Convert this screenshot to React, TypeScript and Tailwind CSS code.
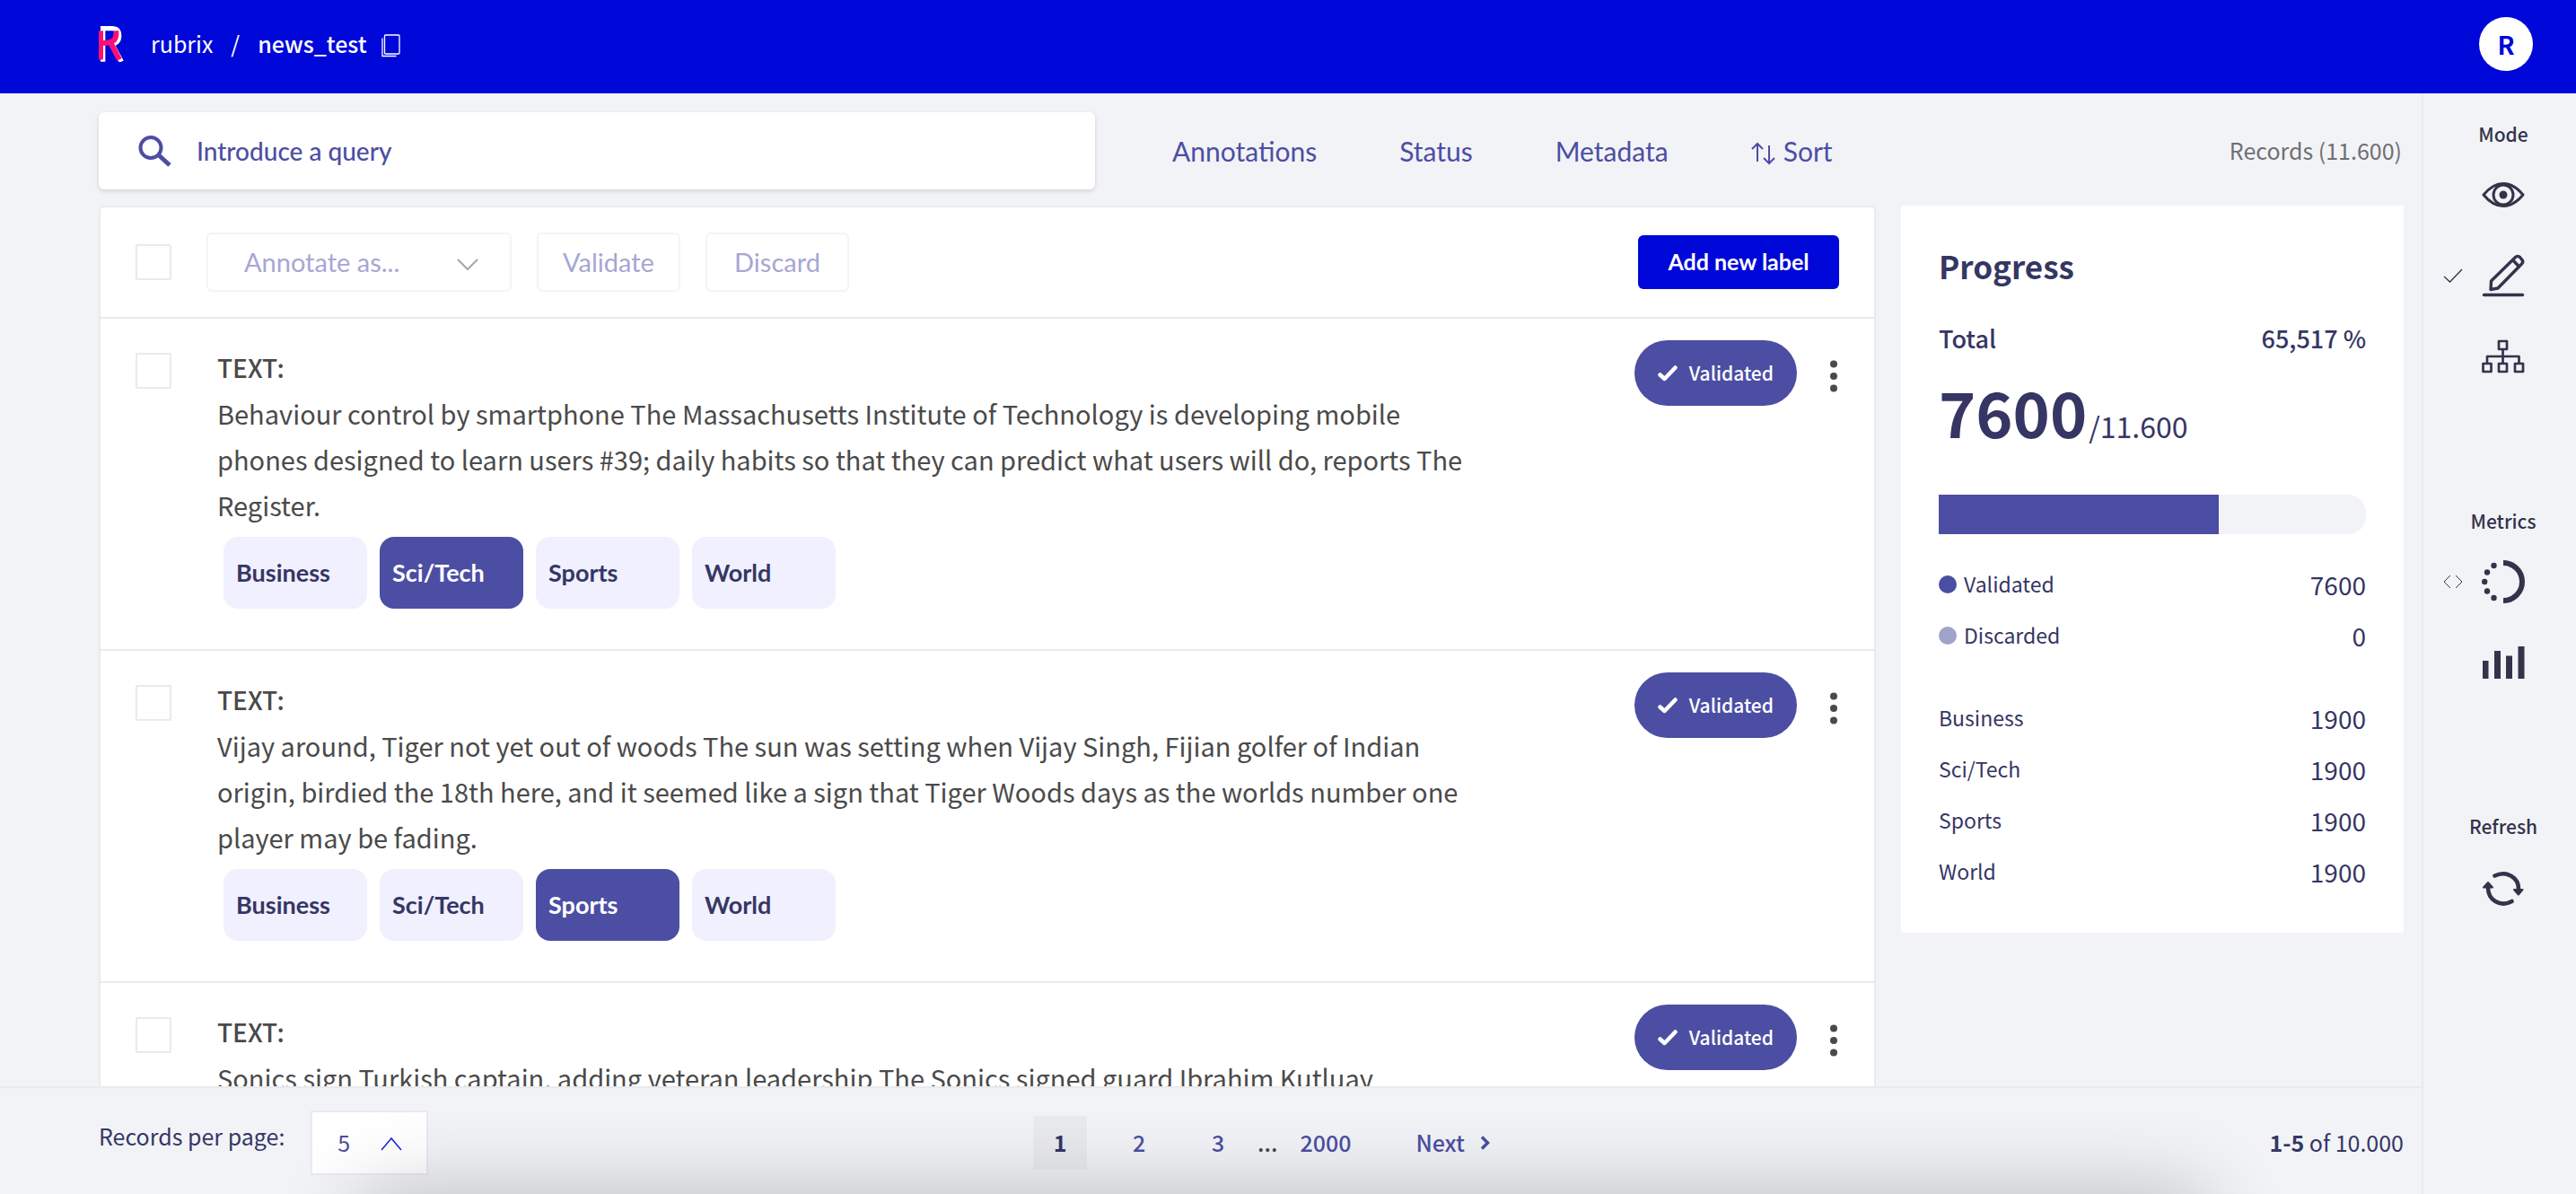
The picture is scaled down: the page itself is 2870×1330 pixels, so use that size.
import React from "react";

const LABELS = ["Business", "Sci/Tech", "Sports", "World"];

const RECORDS = [
  {
    text: "Behaviour control by smartphone The Massachusetts Institute of Technology is developing mobile phones designed to learn users #39; daily habits so that they can predict what users will do, reports The Register.",
    label: "Sci/Tech",
  },
  {
    text: "Vijay around, Tiger not yet out of woods The sun was setting when Vijay Singh, Fijian golfer of Indian origin, birdied the 18th here, and it seemed like a sign that Tiger Woods days as the worlds number one player may be fading.",
    label: "Sports",
  },
  {
    text: "Sonics sign Turkish captain, adding veteran leadership The Sonics signed guard Ibrahim Kutluay",
    label: "Sports",
  },
];

const VALIDATED = 7600;
const TOTAL = 11600;

function Logo() {
  return (
    <svg viewBox="0 0 84 120" className="h-10 w-7" fill="none" aria-label="Rubrix logo">
      <path d="M14 119V8H44C61 8 68 18 68 33C68 49 58 59 44 60L76 119" stroke="#fff" strokeWidth="16" />
      <path d="M7.500 16V112" stroke="#ff0f73" strokeWidth="15" />
      <path d="M58 16C60 44 54 56 15 57M38 52L69 112" stroke="#ff0f73" strokeWidth="18" />
    </svg>
  );
}

function Checkbox({ label }: { label: string }) {
  return (
    <input
      type="checkbox"
      aria-label={label}
      className="size-10 shrink-0 appearance-none rounded-xs border-2 border-[#e9eaee] bg-white checked:bg-[#4c4ea3]"
    />
  );
}

function Header() {
  return (
    <header className="flex h-[104px] shrink-0 items-center justify-between bg-[#0008d9] pr-12 pb-1.5 pl-[110px] text-white">
      <div className="flex items-center">
        <Logo />
        <nav className="flex items-center pl-[30px] text-[25px]" aria-label="Breadcrumb">
          <a href="#rubrix">rubrix</a>
          <span className="px-5">/</span>
          <a href="#news_test" className="font-medium">news_test</a>
        </nav>
        <button type="button" aria-label="Copy name" className="ml-4 pt-1">
          <svg viewBox="0 0 21 26" className="h-[26px] w-[21px]" fill="none" stroke="#fff">
            <rect x="3.500" y="1" width="16.500" height="21" rx="1" strokeWidth="1.300" />
            <path d="M1 4.500V24.500H16.500" strokeWidth="1.300" />
          </svg>
        </button>
      </div>
      <button type="button" className="size-[60px] rounded-full bg-white text-[28px] font-bold text-[#0008d9]">
        R
      </button>
    </header>
  );
}

function FilterBar() {
  return (
    <div className="flex items-center">
      <label className="flex h-[86px] flex-1 items-center rounded-md bg-white pl-11 shadow-[0_2px_5px_rgba(0,0,0,0.14)]">
        <svg viewBox="0 0 37 35" className="h-[35px] w-[37px] shrink-0" fill="none" stroke="#4c4ea3">
          <circle cx="14" cy="13.500" r="11.500" strokeWidth="4" />
          <path d="M22.500 21.500L35 33" strokeWidth="5" />
        </svg>
        <input
          type="text"
          aria-label="Query"
          placeholder="Introduce a query"
          className="ml-7 min-w-0 flex-1 bg-transparent font-[Lato,sans-serif] text-[28px] font-medium outline-none placeholder:text-[#4c4ea3] placeholder:opacity-100"
        />
      </label>
      <div className="flex w-[1458px] items-center justify-between pr-0.5 pl-[86px]">
        <div className="flex gap-[92px] font-[Lato,sans-serif] text-[30px] text-[#4c4ea3]">
          <button type="button">Annotations</button>
          <button type="button">Status</button>
          <button type="button">Metadata</button>
          <button type="button" className="flex items-center gap-2">
            <svg viewBox="0 0 28 26" className="mt-1.5 h-[26px] w-7" fill="none" stroke="currentColor" strokeWidth="2">
              <path d="M7 22V2M1 8L7 2L13 8M20 4V24M14 18L20 24L26 18" />
            </svg>
            Sort
          </button>
        </div>
        <p className="text-[25px] text-[#6f6f72]">Records (11.600)</p>
      </div>
    </div>
  );
}

function Toolbar() {
  return (
    <div className="flex h-[122px] items-center pr-[39px] pl-[39px]">
      <Checkbox label="Select all records" />
      <div className="relative ml-[39px]">
        <select
          aria-label="Annotate as"
          className="h-[66px] w-[340px] appearance-none rounded-md border-2 border-[#f4f4f6] bg-white pl-10 font-[Lato,sans-serif] text-[29px] text-[#a5a7d3]"
        >
          <option>Annotate as...</option>
          {LABELS.map((l) => (
            <option key={l}>{l}</option>
          ))}
        </select>
        <svg viewBox="0 0 24 14" className="pointer-events-none absolute top-[29px] right-[37px] h-3.5 w-6" fill="none" stroke="#a6a6b0" strokeWidth="2">
          <path d="M1 1L12 12L23 1" />
        </svg>
      </div>
      <button type="button" className="ml-7 h-[66px] w-40 rounded-md border-2 border-[#f4f4f6] font-[Lato,sans-serif] text-[29px] text-[#a5a7d3]">
        Validate
      </button>
      <button type="button" className="ml-7 h-[66px] w-40 rounded-md border-2 border-[#f4f4f6] font-[Lato,sans-serif] text-[29px] text-[#a5a7d3]">
        Discard
      </button>
      <button type="button" className="ml-auto h-[60px] w-56 rounded-md bg-[#0008d9] font-[Lato,sans-serif] text-[25px] font-bold text-white">
        Add new label
      </button>
    </div>
  );
}

function RecordRow({ text, label }: { text: string; label: string }) {
  return (
    <article className="flex items-start border-t-2 border-[#e9eaee] pb-[45px] pl-[39px]">
      <div className="pt-[38px]">
        <Checkbox label="Select record" />
      </div>
      <div className="ml-[51px] max-w-[1400px] flex-1 pt-[29px]">
        <h2 className="text-[28px] leading-[51px] font-medium text-[#4a4a4a]">TEXT:</h2>
        <p className="text-[29px] leading-[51px] text-[#4a4a4a]">{text}</p>
        <div className="mt-2.5 ml-[7px] flex gap-3.5">
          {LABELS.map((l) => (
            <button
              key={l}
              type="button"
              aria-pressed={l === label}
              className={
                "h-20 w-40 rounded-2xl pl-3.5 text-left font-[Lato,sans-serif] text-[27px] font-bold " +
                (l === label ? "bg-[#4c4ea3] text-white" : "bg-[#f0f0fe] text-[#353664]")
              }
            >
              {l}
            </button>
          ))}
        </div>
      </div>
      <div className="ml-auto flex items-center gap-[37px] pt-6 pr-[41px]">
        <span className="flex h-[73px] items-center gap-[13px] rounded-full bg-[#4c4ea3] px-[26px] text-[21px] font-medium text-white">
          <svg viewBox="0 0 22 18" className="h-[18px] w-[22px]" fill="none" stroke="currentColor" strokeWidth="4.500" strokeLinecap="round" strokeLinejoin="round">
            <path d="M2.500 10.500L7.500 15L19.500 2.500" />
          </svg>
          Validated
        </span>
        <button type="button" aria-label="Record options" className="pt-1.5">
          <svg viewBox="0 0 8 36" className="h-9 w-2" fill="#4a4a4a">
            <circle cx="4" cy="4.500" r="4" />
            <circle cx="4" cy="18" r="4" />
            <circle cx="4" cy="31.500" r="4" />
          </svg>
        </button>
      </div>
    </article>
  );
}

function StatRow({ name, value, dot }: { name: string; value: number; dot?: string }) {
  return (
    <div className="flex h-[57px] items-center justify-between">
      <dt className="flex items-center gap-2 text-[23px]">
        {dot && <span className={"size-5 rounded-full " + dot} />}
        {name}
      </dt>
      <dd className="text-[28px]">{value}</dd>
    </div>
  );
}

function ProgressCard() {
  return (
    <section className="w-[560px] shrink-0 rounded-xs bg-white px-[42px] pt-[42px] pb-10 text-[#353664]">
      <h2 className="text-[35px] leading-[50px] font-bold">Progress</h2>
      <div className="mt-9 flex justify-between text-[27px] leading-10 font-medium">
        <span>Total</span>
        <span>65,517 %</span>
      </div>
      <p className="mt-[26px] flex items-baseline gap-0.5">
        <strong className="text-[70px] leading-[70px] font-bold">7600</strong>
        <span className="text-[32px] leading-8">/11.600</span>
      </p>
      <div className="mt-[58px] h-11 overflow-hidden rounded-r-[20px] bg-[#f2f3f7]">
        <div className="h-full bg-[#4c4ea3]" style={{ width: `${(VALIDATED / TOTAL) * 100}%` }} />
      </div>
      <dl className="mt-[27px]">
        <StatRow name="Validated" value={VALIDATED} dot="bg-[#4c4ea3]" />
        <StatRow name="Discarded" value={0} dot="bg-[#a1a2cc]" />
      </dl>
      <dl className="mt-[35px]">
        {LABELS.map((l) => (
          <StatRow key={l} name={l} value={1900} />
        ))}
      </dl>
    </section>
  );
}

function Pagination() {
  return (
    <footer className="relative grid h-[120px] shrink-0 grid-cols-[1fr_auto_1fr] items-center overflow-hidden border-t-2 border-[#e9eaee] pt-1 pr-5 pl-[110px] text-[25px] text-[#353664]">
      <div className="flex items-center gap-[29px]">
        <label htmlFor="page-size" className="pb-3.5">Records per page:</label>
        <div className="relative">
          <select id="page-size" className="h-[72px] w-[131px] appearance-none border-2 border-[#e9eaee] bg-white pl-7 text-[#4c4ea3]">
            <option>5</option>
            <option>10</option>
            <option>20</option>
          </select>
          <svg viewBox="0 0 24 16" className="pointer-events-none absolute top-[29px] right-[29px] h-4 w-6" fill="none" stroke="#1a20d9" strokeWidth="1.500">
            <path d="M1 15L12 2L23 15" />
          </svg>
        </div>
      </div>
      <nav className="flex items-center pl-[23px] font-medium text-[#4c4ea3]" aria-label="Pages">
        <button type="button" aria-current="page" className="h-[60px] w-[60px] bg-[#e9eaee] font-bold text-[#353664]">1</button>
        <button type="button" className="ml-7 h-[60px] w-[60px]">2</button>
        <button type="button" className="ml-7 h-[60px] w-[60px]">3</button>
        <span className="mr-[25px] ml-3.5 text-[#4a4a4a]">...</span>
        <button type="button">2000</button>
        <button type="button" className="ml-[72px] flex items-center gap-[17px]">
          Next
          <svg viewBox="0 0 11 16" className="h-4 w-[11px]" fill="none" stroke="currentColor" strokeWidth="3.500">
            <path d="M2 1.500L8.500 8L2 14.500" />
          </svg>
        </button>
      </nav>
      <p className="text-right"><strong className="font-bold">1-5</strong> of 10.000</p>
      <div className="pointer-events-none absolute top-full right-[9%] left-[15%] h-24 shadow-[0_0_90px_rgba(0,0,0,0.24)]" />
    </footer>
  );
}

function SideItem({ label, mark, children }: { label: string; mark?: React.ReactNode; children: React.ReactNode }) {
  return (
    <div className="grid h-[90px] grid-cols-[1fr_48px_1fr] items-center">
      <span className="justify-self-end pr-[21px]">{mark}</span>
      <button type="button" aria-label={label} className="flex justify-center">
        {children}
      </button>
    </div>
  );
}

function Sidebar() {
  return (
    <aside className="w-[172px] shrink-0 border-l-2 border-[#e9eaee] pt-[30px] pl-2 text-[#33334a]">
      <h3 className="mb-2 text-center text-[21px] leading-[30px] font-medium">Mode</h3>
      <SideItem label="Explore">
        <svg viewBox="0 0 48 30" className="h-[30px] w-12" fill="none" stroke="currentColor" strokeWidth="3">
          <path d="M2 15C9 6.500 16 2.500 24 2.500C32 2.500 39 6.500 46 15C39 23.500 32 27.500 24 27.500C16 27.500 9 23.500 2 15Z" strokeLinejoin="round" />
          <circle cx="24" cy="15" r="11" />
          <circle cx="24" cy="15" r="4.500" fill="currentColor" stroke="none" />
        </svg>
      </SideItem>
      <SideItem
        label="Annotate"
        mark={
          <svg viewBox="0 0 22 16" className="h-4 w-[22px]" fill="none" stroke="currentColor" strokeWidth="1.300">
            <path d="M1 9L7.500 15L21 1" />
          </svg>
        }
      >
        <svg viewBox="0 0 48 48" className="size-12" fill="none" stroke="currentColor" strokeWidth="3.400" strokeLinejoin="round">
          <path d="M2.500 45.500H45.500" strokeLinecap="round" />
          <path d="M10 39.500L10.500 30L37.500 3.500C39 2 41 2 42.500 3.500L44.500 6C46 7.500 46 9.500 44.500 11L18 38Z" />
          <path d="M34.500 6.500L41.500 14" />
        </svg>
      </SideItem>
      <SideItem label="Define labels">
        <svg viewBox="0 0 48 38" className="h-[38px] w-12" fill="none" stroke="currentColor" strokeWidth="2.700" strokeLinejoin="round">
          <rect x="19" y="2" width="9" height="9" />
          <rect x="1.500" y="27" width="9" height="9" />
          <rect x="19" y="27" width="9" height="9" />
          <rect x="37" y="27" width="9" height="9" />
          <path d="M23.500 11V27M6 27V19H41.500V27" />
        </svg>
      </SideItem>
      <h3 className="mt-[123px] mb-2 text-center text-[21px] leading-[30px] font-medium">Metrics</h3>
      <SideItem
        label="Progress"
        mark={
          <svg viewBox="0 0 22 16" className="h-4 w-[22px]" fill="none" stroke="currentColor">
            <path d="M8 1L1 8L8 15M14 1L21 8L14 15" />
          </svg>
        }
      >
        <svg viewBox="0 0 48 48" className="size-12" fill="currentColor">
          <path d="M24 3A21 21 0 0 1 24 45" fill="none" stroke="currentColor" strokeWidth="6" />
          <circle cx="13.500" cy="6" r="3.200" />
          <circle cx="6" cy="13.500" r="3.200" />
          <circle cx="3.200" cy="24" r="3.200" />
          <circle cx="6" cy="34.500" r="3.200" />
          <circle cx="13.500" cy="42" r="3.200" />
        </svg>
      </SideItem>
      <SideItem label="Stats">
        <svg viewBox="0 0 48 36" className="h-9 w-12" fill="currentColor">
          <rect x="1" y="16" width="6.500" height="20" />
          <rect x="14" y="5" width="7" height="31" />
          <rect x="27" y="10.500" width="7" height="25.500" />
          <rect x="40.500" y="0" width="7" height="36" />
        </svg>
      </SideItem>
      <h3 className="mt-[122px] mb-2 text-center text-[21px] leading-[30px] font-medium">Refresh</h3>
      <SideItem label="Refresh">
        <svg viewBox="0 0 48 40" className="mt-1 h-10 w-12" fill="none" stroke="currentColor" strokeWidth="4.600" strokeLinecap="round">
          <path d="M14.500 5.500C28 -1 41 8 41 20" />
          <path d="M33.500 34C20 41 7 32 7 19" />
          <path d="M36 21H45.500L40.800 26.500Z" fill="currentColor" strokeWidth="2" strokeLinejoin="round" />
          <path d="M2 18.500H12L7 13Z" fill="currentColor" strokeWidth="2" strokeLinejoin="round" />
        </svg>
      </SideItem>
    </aside>
  );
}

export default function App() {
  return (
    <div className="flex h-screen flex-col overflow-hidden bg-[#f2f3f7] font-['Noto_Sans_CJK_SC',sans-serif]">
      <Header />
      <div className="flex min-h-0 flex-1">
        <div className="flex min-w-0 flex-1 flex-col">
          <main className="min-h-0 flex-1 overflow-hidden pt-[21px] pr-5 pl-[110px]">
            <FilterBar />
            <div className="mt-[18px] flex items-start gap-7">
              <section className="min-w-0 flex-1 rounded-md border-2 border-[#e9eaee] bg-white">
                <Toolbar />
                {RECORDS.map((r) => (
                  <RecordRow key={r.text} text={r.text} label={r.label} />
                ))}
              </section>
              <ProgressCard />
            </div>
          </main>
          <Pagination />
        </div>
        <Sidebar />
      </div>
    </div>
  );
}
